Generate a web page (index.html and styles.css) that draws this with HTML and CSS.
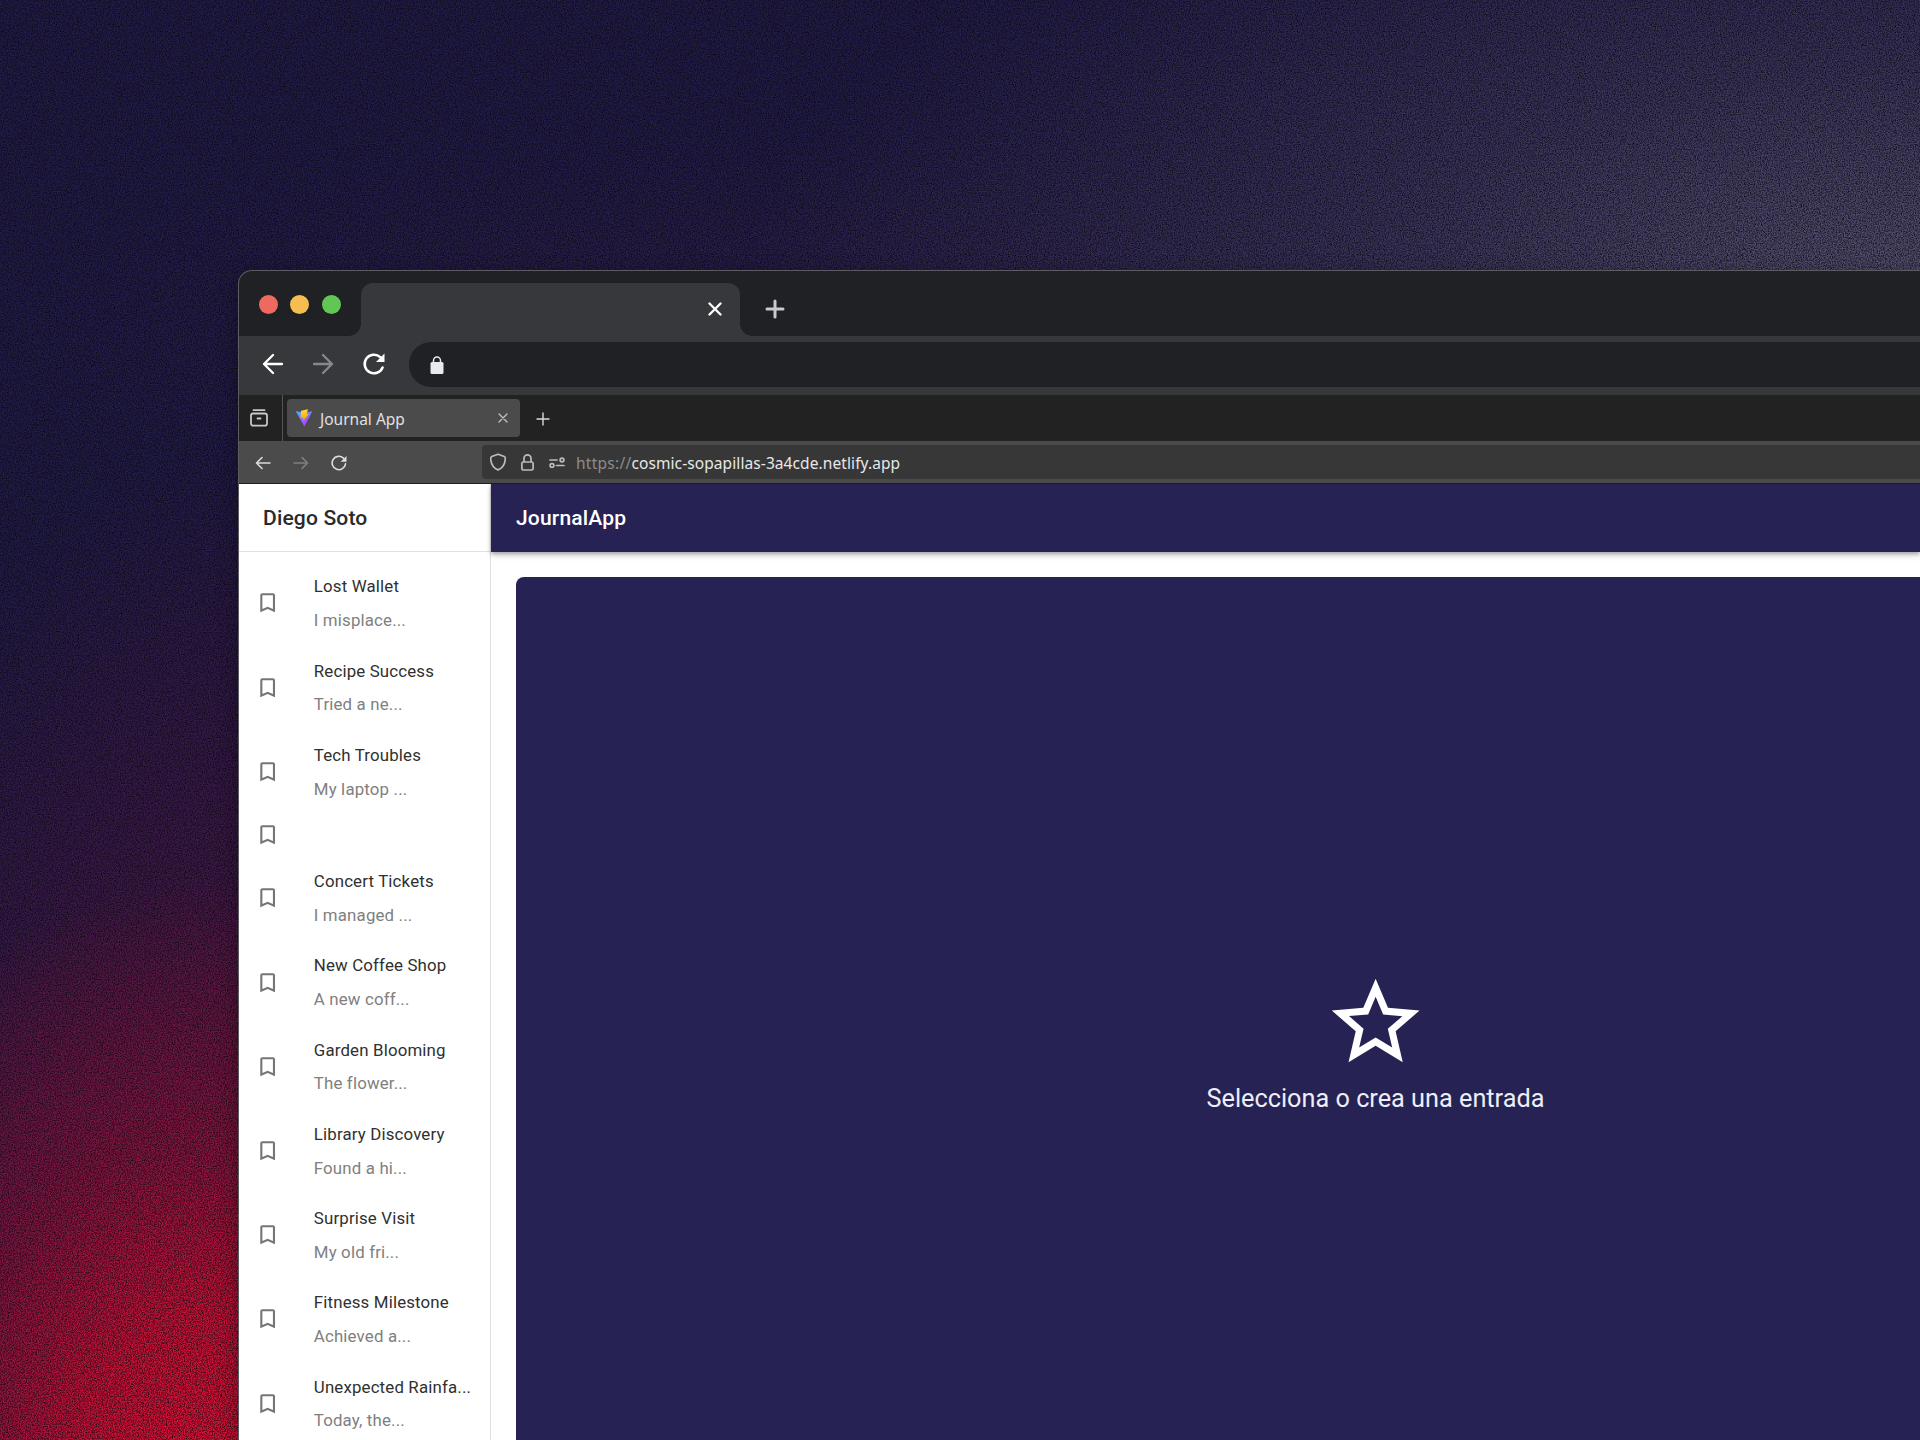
FILE: index.html
```html
<!DOCTYPE html>
<html lang="es">
<head>
<meta charset="utf-8">
<title>Journal App</title>
<link rel="stylesheet" href="styles.css">
</head>
<body>
<svg class="grain" width="1920" height="1440" aria-hidden="true">
  <filter id="grain" x="0" y="0" width="100%" height="100%" color-interpolation-filters="sRGB">
    <feTurbulence type="fractalNoise" baseFrequency="0.83" numOctaves="3" seed="4"/>
    <feColorMatrix values="0 0 0 0 0.03  0 0 0 0 0.01  0 0 0 0 0.04  1.700 0 0 0 -0.580"/>
  </filter>
  <rect width="1920" height="1440" filter="url(#grain)"/>
</svg>
<div class="window">
  <div class="tabs">
    <div class="lights"><i class="red"></i><i class="yellow"></i><i class="green"></i></div>
    <div class="tab">
      <svg width="14" height="14" viewBox="0 0 14 14"><path d="M1.500 1.500l11 11M12.500 1.500l-11 11" stroke="#fff" stroke-width="2.300" stroke-linecap="round"/></svg>
    </div>
    <svg class="plus" width="20" height="20" viewBox="0 0 20 20"><path d="M10 2v16M2 10h16" stroke="#c9cace" stroke-width="3" stroke-linecap="round"/></svg>
  </div>
  <div class="toolbar">
    <svg width="22" height="22" viewBox="0 0 22 22" fill="none" stroke="#fff" stroke-width="2.300" stroke-linecap="round" stroke-linejoin="round"><path d="M20 11H2M11 2L2 11l9 9"/></svg>
    <svg width="22" height="22" viewBox="0 0 22 22" fill="none" stroke="#87888b" stroke-width="2.300" stroke-linecap="round" stroke-linejoin="round"><path d="M2 11h18M11 2l9 9-9 9"/></svg>
    <svg width="24" height="24" viewBox="0 0 24 24" fill="none" stroke="#fff" stroke-width="2.500" stroke-linecap="round"><path d="M20.600 15.500A9.300 9.300 0 1 1 18.300 5.200"/><path d="M22.500 1.500v8.500H14z" fill="#fff" stroke="none"/></svg>
    <div class="address"><svg width="14" height="18" viewBox="0 0 14 18"><rect x="0.500" y="6" width="13" height="12" rx="1.500" fill="#e9eaed"/><path d="M3.500 7V4.500a3.500 3.500 0 0 1 7 0V7" fill="none" stroke="#e9eaed" stroke-width="1.500"/></svg></div>
  </div>
  <div class="fx-tabs">
    <div class="fx-view"><svg width="18" height="18" viewBox="0 0 18 18" fill="none" stroke="#c8c8c8" stroke-width="1.800" stroke-linecap="round"><path d="M3.500 1.200h11"/><rect x="1" y="4.500" width="16" height="12.200" rx="2.200"/><path d="M7.500 9.500h3"/></svg></div>
    <div class="fx-tab">
      <svg width="18" height="18" viewBox="0 0 18 18"><defs><linearGradient id="va" x1="0" y1="0" x2=".6" y2="1"><stop offset="0" stop-color="#41b4ff"/><stop offset="1" stop-color="#bd34fe"/></linearGradient><linearGradient id="vb" x1="0" y1="0" x2="0" y2="1"><stop offset="0" stop-color="#ffdb3e"/><stop offset="1" stop-color="#ff9a00"/></linearGradient></defs><path d="M.8 2.300l8.400 1.300 8.200-1.300L9.300 17.500z" fill="url(#va)"/><path d="M13 .3L6 1.700l-.5 7.500 2.800-.5-.3 3.300L14 4.800l-2.500.4z" fill="url(#vb)"/></svg>
      <span class="fx-title">Journal App</span>
      <svg width="10" height="10" viewBox="0 0 10 10"><path d="M1 1l8 8M9 1L1 9" stroke="#c2c2c2" stroke-width="1.300" stroke-linecap="round"/></svg>
    </div>
    <svg class="fx-plus" width="14" height="14" viewBox="0 0 14 14"><path d="M7 1v12M1 7h12" stroke="#dadada" stroke-width="1.400" stroke-linecap="round"/></svg>
  </div>
  <div class="fx-nav">
    <svg width="16" height="14" viewBox="0 0 16 14" fill="none" stroke="#dcdcdc" stroke-width="1.600" stroke-linecap="round" stroke-linejoin="round"><path d="M15 7H1.500M7 1.500L1.500 7 7 12.500"/></svg>
    <svg width="16" height="14" viewBox="0 0 16 14" fill="none" stroke="#808080" stroke-width="1.600" stroke-linecap="round" stroke-linejoin="round"><path d="M1 7h13.500M9 1.500L14.500 7 9 12.500"/></svg>
    <svg width="16" height="16" viewBox="0 0 16 16" fill="none" stroke="#dcdcdc" stroke-width="1.600" stroke-linecap="round"><path d="M14.500 8.800A6.700 6.700 0 1 1 12.500 3.200"/><path d="M15.500 1v5.800H9.700z" fill="#dcdcdc" stroke="none"/></svg>
    <div class="fx-url">
      <svg width="16" height="18" viewBox="0 0 16 18" fill="none" stroke="#bcbcbc" stroke-width="1.700" stroke-linejoin="round"><path d="M8 1.200L14.300 3.500Q15.600 4 15.200 7C14.600 11.800 12 15.200 8 16.900 4 15.200 1.400 11.800.8 7 .4 4 1.700 3.500 1.700 3.500z"/></svg>
      <svg width="13" height="17" viewBox="0 0 13 17" fill="none" stroke="#bcbcbc" stroke-width="1.700"><rect x=".9" y="8" width="11.200" height="8" rx="1.500"/><path d="M3 8V4.300a3.500 3.500 0 0 1 7 0V8"/></svg>
      <svg width="16" height="11" viewBox="0 0 16 11" fill="none" stroke="#bcbcbc" stroke-width="1.700" stroke-linecap="round"><path d="M1 3h7M7.500 8.500H15"/><circle cx="13" cy="3" r="1.900"/><circle cx="3" cy="8.500" r="1.900"/></svg>
      <span class="url"><span class="scheme">https://</span>cosmic-sopapillas-3a4cde.netlify.app</span>
    </div>
  </div>
  <div class="app">
    <aside class="sidebar">
      <h1 class="user">Diego Soto</h1>
      <ul class="notes" id="notes"></ul>
    </aside>
    <main class="main">
      <header class="appbar">JournalApp</header>
      <section class="card">
        <svg width="105.300" height="105.300" viewBox="0 0 24 24" fill="#fff"><path d="M22 9.240l-7.190-.620L12 2 9.190 8.630 2 9.240l5.460 4.730L5.820 21 12 17.270 18.180 21l-1.630-7.030L22 9.240zM12 15.400l-3.760 2.270 1-4.280-3.320-2.880 4.380-.380L12 6.100l1.710 4.040 4.380.380-3.320 2.880 1 4.280L12 15.400z"/></svg>
        <p class="hint">Selecciona o crea una entrada</p>
      </section>
    </main>
  </div>
</div>
<script src="script.js"></script>
</body>
</html>
```
FILE: script.js
```js
const notes = [
  ["Lost Wallet", "I misplace..."],
  ["Recipe Success", "Tried a ne..."],
  ["Tech Troubles", "My laptop ..."],
  ["", ""],
  ["Concert Tickets", "I managed ..."],
  ["New Coffee Shop", "A new coff..."],
  ["Garden Blooming", "The flower..."],
  ["Library Discovery", "Found a hi..."],
  ["Surprise Visit", "My old fri..."],
  ["Fitness Milestone", "Achieved a..."],
  ["Unexpected Rainfa...", "Today, the..."]
];
document.getElementById("notes").innerHTML = notes.map(([title, body]) => `
  <li class="note${title ? "" : " empty"}">
    <svg class="mark" width="25.300" height="25.300" viewBox="0 0 24 24"><path d="M17 3H7c-1.100 0-1.990.900-1.990 2L5 21l7-3 7 3V5c0-1.100-.900-2-2-2zm0 15l-5-2.180L7 18V5h10v13z"/></svg>
    <div class="text"><div class="title">${title}</div><div class="body">${body}</div></div>
  </li>`).join("");
```
FILE: styles.css
```css
* { box-sizing: border-box; }
body {
  margin: 0;
  width: 1920px;
  height: 1440px;
  overflow: hidden;
  display: flex;
  padding: 270px 0 0 238px;
  font-family: Roboto, sans-serif;
  background:
    radial-gradient(ellipse 470px 600px at 210px 1480px, #de1438 0%, rgba(208, 18, 54, .9) 28%, rgba(165, 20, 60, .62) 55%, rgba(110, 26, 70, 0) 100%),
    radial-gradient(ellipse 560px 1000px at 270px 1440px, rgba(130, 20, 65, .8) 0%, rgba(100, 22, 70, .5) 50%, rgba(70, 24, 80, 0) 100%),
    radial-gradient(ellipse 1150px 500px at 1900px 290px, rgba(96, 92, 120, .85) 0%, rgba(78, 73, 106, .55) 45%, rgba(50, 44, 90, 0) 100%),
    radial-gradient(ellipse 800px 200px at 800px 330px, rgba(52, 34, 76, .6) 0%, rgba(46, 30, 76, 0) 100%),
    #211d49;
}
.grain { position: absolute; left: 0; top: 0; z-index: 0; }
.window {
  position: relative;
  z-index: 1;
  flex: 1;
  min-width: 0;
  height: 1170px;
  border: 1px solid #5c5b5f;
  border-width: 1px 0 0 1px;
  border-radius: 14px 0 0 0;
  overflow: hidden;
  display: flex;
  flex-direction: column;
  background: #202124;
  box-shadow: 0 6px 20px rgba(0, 0, 0, .35);
}
.tabs { height: 65px; flex: none; display: flex; padding-top: 12px; }
.lights { width: 122px; flex: none; display: flex; gap: 12.500px; padding: 12px 0 0 19.500px; }
.lights i { width: 19px; height: 19px; border-radius: 50%; }
.red { background: #ee6a5f; }
.yellow { background: #f6be50; }
.green { background: #62c655; }
.tab {
  position: relative;
  width: 379px;
  flex: none;
  display: flex;
  justify-content: flex-end;
  padding: 19px 18px 0 0;
  border-radius: 12px 12px 0 0;
  background: #37383b;
}
.tab::before, .tab::after {
  content: "";
  position: absolute;
  bottom: 0;
  width: 12px;
  height: 12px;
}
.tab::before { left: -12px; background: radial-gradient(circle at 0 0, #202124 11.500px, #37383b 12px); }
.tab::after { right: -12px; background: radial-gradient(circle at 100% 0, #202124 11.500px, #37383b 12px); }
.plus { margin: 16px 0 0 25px; }
.toolbar { height: 59px; flex: none; display: flex; align-items: center; gap: 28px; padding: 0 0 3px 23px; background: #37383b; }
.toolbar > svg { flex: none; }
.address { flex: 1; height: 45px; margin: 0 0 0 -5px; display: flex; align-items: center; padding: 1px 0 0 21px; border-radius: 22px 0 0 22px; background: #202124; }
.fx-tabs { height: 46px; flex: none; display: flex; align-items: center; background: #222; }
.fx-view { width: 44px; height: 46px; display: flex; align-items: center; padding-left: 11px; border-right: 1px solid #555; }
.fx-tab { width: 233px; height: 38px; margin-left: 4px; display: flex; align-items: center; padding: 0 12px 0 8px; border-radius: 4px; background: #4b4b4b; }
.fx-title { flex: 1; padding: 1px 0 0 7px; font: 15.500px "Noto Sans", sans-serif; color: #e0e0e0; }
.fx-plus { margin: 1px 0 0 16px; }
.fx-nav { height: 43px; flex: none; display: flex; align-items: center; gap: 22px; padding-left: 16px; border-bottom: 1px solid #202020; background: #4b4b4b; }
.fx-nav > svg { flex: none; margin-top: 1px; }
.fx-url { flex: 1; height: 34px; margin-left: 113px; display: flex; align-items: center; gap: 15px; padding-left: 8px; border-radius: 4px 0 0 4px; background: #373737; }
.url { margin-left: -4px; padding-top: 1px; font: 15.500px "Noto Sans", sans-serif; letter-spacing: .090px; color: #e8e8e8; }
.scheme { color: #8b8b8b; letter-spacing: .250px; }
.app { flex: 1; min-height: 0; display: flex; background: #fff; }
.sidebar { width: 252px; flex: none; border-right: 1px solid #e0e0e0; }
.user { margin: 0; height: 68px; padding-left: 24px; line-height: 67px; font-size: 21.060px; font-weight: 500; letter-spacing: .158px; color: #2a2a2a; border-bottom: 1px solid #e0e0e0; }
.notes { margin: 0; padding: 9px 0 0; list-style: none; }
.note { height: 84.240px; display: flex; align-items: center; padding-left: 16px; }
.note.empty { height: 42.120px; }
.empty .text { display: none; }
.mark { flex: none; fill: #757575; }
.text { padding: 2px 0 0 33.500px; font-size: 16.850px; line-height: 33.700px; letter-spacing: .158px; white-space: nowrap; }
.title { color: #303030; }
.body { color: #808080; }
.main { flex: 1; min-width: 0; display: flex; flex-direction: column; }
.appbar { height: 67.500px; flex: none; padding-left: 25px; line-height: 67px; font-size: 21.060px; font-weight: 500; letter-spacing: .158px; color: #fff; background: #262254; box-shadow: 0 2px 4px rgba(0, 0, 0, .3), 0 4px 7px rgba(0, 0, 0, .1); }
.card { flex: 1; margin: 25.500px 0 0 25px; display: flex; flex-direction: column; align-items: center; padding: 393px 0 0 315px; border-radius: 8px 0 0 0; background: #262254; }
.hint { margin: 3px 0 0; font-size: 25.270px; line-height: 42px; color: #eeeef6; }
```
